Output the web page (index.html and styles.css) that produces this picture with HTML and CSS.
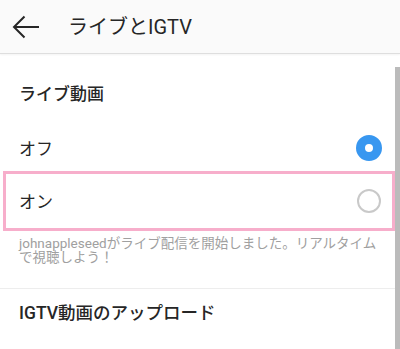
FILE: index.html
```html
<!DOCTYPE html>
<html lang="ja">
<head>
    <meta charset="UTF-8">
    <title>ライブとIGTV</title>
    <link rel="stylesheet" href="styles.css">
</head>
<body>
    <div class="header">
        <svg class="back" width="40" height="54" viewBox="0 0 40 54">
            <path d="M14 27H39M24.5 16.5L14 27L24.5 37.5" fill="none" stroke="#262626" stroke-width="2"/>
        </svg>
        <div class="headtitle">ライブとIGTV</div>
    </div>
    <div class="content">
        <div class="sectiontitle">ライブ動画</div>
        <div class="row">
            <span>オフ</span>
            <span class="radio on"></span>
        </div>
        <div class="row">
            <span>オン</span>
            <span class="radio"></span>
        </div>
        <div class="helper">johnappleseedがライブ配信を開始しました。リアルタイムで視聴しよう！</div>
        <div class="sectiontitle igtv">IGTV動画のアップロード</div>
        <div class="highlight"></div>
        <div class="scrollbar"></div>
    </div>
</body>
</html>
```
FILE: styles.css
```css
* {
    box-sizing: border-box;
}

body, html {
    margin: 0;
    padding: 0;
    font-family: Roboto, "Noto Sans CJK JP", sans-serif;
    color: #262626;
    background: #fff;
}
body {
    width: 400px;
    height: 349px;
    overflow: hidden;
}

.header {
    height: 54px;
    background: #fafafa;
    border-bottom: 1px solid #dedede;
    box-shadow: 0 1px 2px rgba(0,0,0,0.05);
    display: flex;
    align-items: center;
}
.back {
    display: block;
    margin-right: 28px;
}
.headtitle {
    font-size: 20px;
    line-height: 24px;
    margin-top: 1px;
}

.content {
    position: relative;
    height: 295px;
}
.sectiontitle {
    font-size: 17px;
    font-weight: 500;
    line-height: 24px;
    padding: 28px 19px 15px;
}
.igtv {
    border-top: 1px solid #ededed;
    padding-top: 12px;
    font-size: 17.5px;
}
.row {
    height: 53px;
    display: flex;
    align-items: center;
    justify-content: space-between;
    padding: 0 18px 0 19px;
    font-size: 17px;
}
.radio {
    width: 24px;
    height: 24px;
    border-radius: 50%;
    border: 2px solid #c9c9c9;
    margin-right: 1px;
}
.radio.on {
    width: 26px;
    height: 26px;
    margin-right: 0;
    border: 9px solid #3897f0;
    background: #fff;
}
.helper {
    font-size: 13.5px;
    line-height: 14px;
    color: #a0a0a0;
    padding: 9px 22px 24px 19px;
}
.highlight {
    position: absolute;
    left: 3px;
    top: 117px;
    width: 392px;
    height: 60px;
    border: 3px solid #f7aecb;
}
.scrollbar {
    position: absolute;
    right: 0;
    top: 13px;
    bottom: 0;
    width: 5px;
    background: #bbbbbb;
}
```
